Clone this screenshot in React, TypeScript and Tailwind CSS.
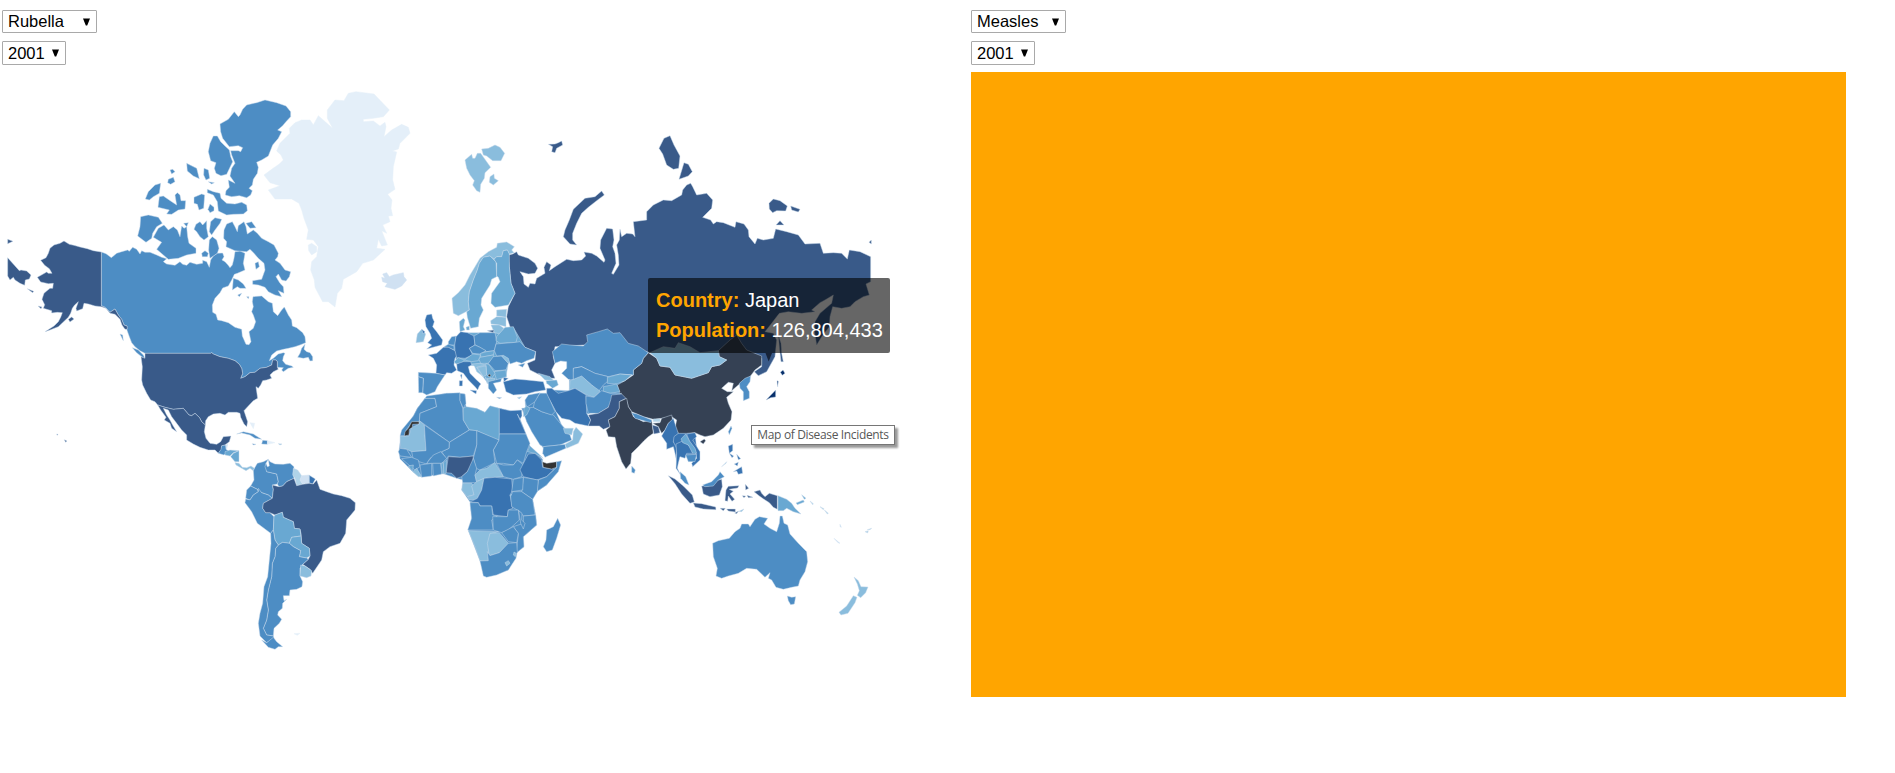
import React from "react";

type Region = { x: number; y: number; shapes: string[] };

const FILLS: Record<string, string> = {
  D: "#395a89",
  C: "#4d8dc4",
  S: "#3873b1",
  M: "#69a8d2",
  L: "#8abddd",
  G: "#b0d3e8",
  I: "#d0e1f2",
  V: "#e4eff9",
  K: "#354154",
  X: "#333333",
  J: "#08306b",
};

// Each region keeps its outlines in a local grid of thirds of a pixel.
// The first letter of a shape names its fill.
const REGIONS: Region[] = [
  {
    // Alaska and Canada
    x: 0,
    y: 80,
    shapes: [
      "C 304,516 318,521 334,533 350,520 365,515 383,510 388,514 398,502 410,508 420,522 425,512 435,517 450,517 470,525 485,532 500,536 490,545 500,552 525,556 540,545 548,553 560,556 570,547 590,553 608,550 608,541 620,545 628,562 632,540 640,528 652,520 668,519 672,530 666,540 675,545 684,555 690,563 697,555 702,535 705,515 720,513 735,520 730,550 735,570 712,580 703,583 695,600 685,618 668,624 660,638 645,655 637,675 638,697 648,703 653,720 665,722 685,728 705,742 725,748 727,768 738,793 747,794 753,785 747,755 760,745 767,725 760,705 755,695 760,680 757,665 759,650 785,648 805,665 817,670 820,695 833,707 845,690 853,681 865,705 875,720 877,738 890,743 908,758 915,770 917,788 900,795 885,800 865,805 850,808 830,813 815,825 808,842 820,835 835,822 850,818 855,820 850,830 848,842 857,853 875,858 880,862 865,865 850,875 845,870 850,863 832,862 832,845 828,840 818,840 815,855 800,862 780,865 765,877 750,878 735,890 722,895 728,880 725,865 718,853 705,842 685,835 660,830 640,822 635,818 632,820 435,820 420,812 405,800 395,788 388,770 380,748 381,738 372,735 365,718 355,705 345,687 330,697 315,682 304,677",
      "D 304,516 280,512 262,506 240,501 222,496 208,493 192,483 180,490 162,495 150,505 145,520 138,533 122,541 134,556 148,566 156,580 145,580 140,576 128,583 112,592 122,606 145,611 160,610 158,625 150,625 140,633 132,640 126,658 134,674 130,685 155,692 155,699 172,697 187,698 182,712 175,725 162,738 135,755 150,750 175,740 186,730 205,712 212,700 217,685 224,675 235,665 228,685 230,693 248,686 252,670 265,672 285,678 304,680 318,685 330,700 345,703 360,718 366,735 375,748 383,747 381,738 372,735 365,718 355,705 345,687 330,697 315,682 304,677",
      "D 23,478 39,484 23,491",
      "D 23,533 58,572 63,570 80,573 93,585 88,597 76,600 74,616 60,610 45,600 40,592 30,600 23,588",
      "D 82,626 101,634 98,638",
      "D 114,678 126,681 123,686",
      "D 205,718 215,711 222,717 210,726",
      "C 728,88 740,75 770,68 795,60 830,68 858,78 872,95 872,110 858,125 848,137 833,150 845,155 835,175 818,195 810,215 805,228 785,240 770,247 775,262 772,280 760,298 757,315 747,325 757,332 752,345 740,353 718,347 695,350 676,345 678,332 688,322 685,300 705,310 690,288 695,265 705,250 695,225 692,212 715,212 722,215 728,203 715,197 688,200 668,175 662,155 660,132 685,118 703,95 715,110 720,105",
      "C 640,168 652,168 662,185 675,198 688,210 692,230 698,245 690,262 680,283 663,287 648,280 643,265 648,248 632,242 625,215 630,190",
      "C 622,328 640,335 660,340 663,355 680,370 705,372 725,367 740,375 742,392 730,402 700,403 680,405 655,393 652,365 640,345 622,338",
      "C 510,270 518,268 525,275 515,282",
      "C 505,298 520,292 525,305 512,313 503,308",
      "C 560,250 590,265 598,296 580,288 562,273",
      "C 612,265 625,270 629,295 618,300 611,285",
      "C 625,305 643,308 635,312",
      "C 436,357 445,335 465,315 482,310 478,340 460,350 448,360",
      "C 478,350 490,348 515,365 530,375 525,345 532,338 540,345 543,362 557,362 555,387 535,390 515,403 500,402 508,390 474,382",
      "C 582,352 605,342 614,345 611,385 597,390 592,373 582,370",
      "C 630,372 642,382 642,392 630,398 624,388",
      "C 422,410 445,405 475,412 487,430 470,440 458,460 455,475 438,487 413,468 420,440",
      "C 460,472 475,445 492,435 505,450 520,440 532,450 540,470 545,438 552,445 560,440 563,470 567,490 588,505 588,520 560,525 535,535 505,538 490,525 470,508 485,487",
      "C 551,430 565,428 560,440",
      "C 588,433 600,425 608,435 620,422 620,445 625,470 612,480 600,470 590,455 582,448",
      "C 632,425 645,413 665,418 660,430 645,450 635,465 628,455",
      "C 628,480 637,470 650,480 657,505 652,520 640,528 630,535 626,510",
      "C 605,520 615,512 625,520 622,530 607,530",
      "C 672,450 680,432 697,425 705,440 712,455 715,437 732,425 738,440 742,462 760,450 772,460 785,475 805,485 822,495 835,520 833,530 825,540 840,550 855,570 872,575 868,590 858,603 845,600 835,582 828,590 840,610 850,620 852,640 835,632 845,650 825,645 805,635 795,622 775,615 758,613 758,602 785,598 795,570 792,550 775,535 762,520 750,508 740,515 705,512 678,500 680,485 671,475",
      "C 738,430 755,425 768,443 750,445",
      "C 765,550 775,545 778,560 768,568",
      "C 700,595 715,600 730,612 738,625 720,625 712,620 697,630",
      "C 713,645 725,640 718,650",
      "C 740,650 747,650 745,656",
      "C 360,762 368,765 370,782",
    ],
  },
  {
    // Greenland and Iceland
    x: 200,
    y: 80,
    shapes: [
      "V 192,285 215,268 238,252 250,240 243,225 230,213 240,190 270,160 268,145 285,128 305,120 330,120 340,135 355,107 398,145 382,115 382,90 405,60 432,62 445,40 468,35 522,42 568,90 550,110 520,115 490,118 490,125 520,123 540,138 555,127 558,140 552,170 575,150 605,133 625,142 630,160 600,190 595,207 577,213 590,216 580,260 578,300 585,328 563,343 576,360 573,385 578,407 565,408 570,425 548,435 560,460 545,452 562,495 545,498 535,478 530,505 555,508 520,540 488,550 470,575 430,598 425,625 412,640 405,681 385,665 368,665 345,622 343,600 332,570 335,545 350,530 355,500 340,480 320,478 325,450 312,415 305,390 297,370 275,357 225,357 205,330 240,317 210,308",
      "V 325,495 335,490 350,500 350,515 335,525 326,512",
      "I 545,592 555,595 548,582 560,578 568,590 580,585 610,578 612,590 620,600 605,618 585,628 555,620 562,610 548,605",
    ],
  },
  {
    // The Americas
    x: 120,
    y: 330,
    shapes: [
      "C 555,43 545,55 540,70 533,82 550,85 565,82 570,93 578,92 578,80 570,68 560,65 552,58",
      "C 37,53 55,60 70,75 76,88 65,80 50,68",
      "D 63,80 75,85 75,70 272,70 275,68 280,72 300,80 325,85 345,92 358,103 365,115 368,130 362,145 375,140 390,128 405,127 420,115 440,112 455,105 458,90 468,90 472,95 472,112 475,118 460,125 450,135 455,145 440,150 428,152 422,165 415,175 408,170 413,205 400,212 385,228 372,242 378,260 383,275 380,290 372,282 362,262 360,250 350,247 325,247 315,255 300,250 280,252 265,260 257,272 256,285 245,275 238,262 225,250 215,257 207,255 190,235 160,238 135,232 113,225 105,215 92,210 80,190 68,165 65,150 67,110",
      "D 113,225 135,232 160,238 190,235 207,255 215,257 225,250 238,262 245,275 256,285 253,305 258,325 270,340 290,343 302,335 310,320 333,318 328,335 315,345 305,348 305,358 295,370 285,360 265,360 240,352 220,342 200,330 200,315 185,300 170,280 155,260 145,240 130,235 140,255 150,270 158,285 170,305 155,295 150,280 133,270 138,262 122,240",
      "C 303,358 305,347 317,345 318,358 325,362 312,375 295,370",
      "I 318,345 323,343 320,357",
      "M 315,365 330,360 357,362 340,368 330,378 315,375",
      "M 357,362 357,395 345,395 332,380 340,370",
      "L 345,398 357,400 367,412 380,413 393,408 403,415 400,422 390,415 378,422 360,412 348,405",
      "C 350,312 370,305 400,312 425,328 405,325 390,315 365,309",
      "C 428,331 442,332 442,343 425,342",
      "V 443,332 465,338 443,343",
      "C 397,341 408,343 400,345",
      "L 475,341 486,342 480,345",
      "V 390,278 404,280 400,296",
      "C 445,388 438,400 440,425 470,432 475,455 472,462 457,465 460,478 457,505 445,495 425,488 412,478 392,468 402,450 400,422 405,412 412,400 430,395",
      "C 445,388 448,408 442,410 438,400 435,410 440,425 470,432 475,455 472,462 477,470 488,468 500,455 522,445 520,430 522,410 510,400 490,403 465,402 450,395",
      "G 520,415 533,420 545,437 540,450 548,463 530,467 525,445 518,435",
      "I 545,437 568,435 568,458 548,462 540,450",
      "S 568,436 586,447 578,462 568,458",
      "C 392,468 412,478 415,485 400,495 390,510 377,505 380,480",
      "C 415,475 425,488 445,495 457,505 430,520 428,535 437,548 450,548 462,560 460,600 452,610 412,580 395,545 375,518 377,507 390,510 400,495 415,485",
      "D 457,465 477,470 488,468 500,455 522,445 530,467 548,463 568,460 580,462 590,450 600,478 620,485 640,492 665,497 690,505 706,518 705,540 680,570 677,610 660,640 630,650 610,665 605,690 578,730 570,718 548,703 565,688 570,678 568,655 545,640 543,610 540,597 523,595 520,575 490,562 487,547 465,555 450,548 437,548 428,535 430,520 457,505 460,478",
      "M 462,560 465,555 487,547 490,562 520,575 523,595 540,597 543,618 515,622 508,640 488,637 475,645 465,630 460,600",
      "M 508,640 515,622 543,618 545,640 568,655 570,678 560,684 538,680 542,662 520,650",
      "C 475,645 488,637 508,640 520,650 542,662 538,680 560,684 565,688 548,703 540,715 540,738 548,755 546,770 530,778 510,780 508,797 490,797 492,812 500,808 488,820 487,835 475,845 473,855 485,868 478,880 462,895 460,918 440,915 430,895 440,870 445,840 440,810 445,780 455,740 457,700 465,680 467,655",
      "L 542,705 555,708 575,722 573,738 560,743 540,738",
      "C 452,610 460,600 465,630 475,645 467,655 465,680 457,700 455,740 445,780 440,810 445,840 440,870 430,895 440,915 460,918 462,925 440,938 420,918 415,880 420,850 428,820 432,770 443,740 448,690 453,640",
      "C 425,930 440,938 460,922 470,935 488,950 475,950 465,958 445,952",
      "V 522,911 540,910 532,916",
    ],
  },
  {
    // Russia and the Arctic coast
    x: 440,
    y: 130,
    shapes: [
      "D 218,372 230,365 235,375 265,385 285,400 293,415 285,430 265,432 240,425 250,440 252,462 265,472 270,460 285,462 290,445 315,430 312,412 320,395 333,405 328,422 345,410 380,388 400,392 425,390 437,378 432,366 455,370 470,378 492,397 495,390 480,355 482,330 500,295 518,297 522,330 518,350 525,370 528,400 515,430 520,433 537,405 535,375 530,345 538,330 540,297 545,320 560,310 578,312 585,320 580,275 620,270 620,245 640,225 670,210 695,212 725,195 728,180 740,165 752,160 758,170 770,195 800,190 818,210 815,235 788,262 812,270 820,282 830,275 850,278 885,292 888,275 912,282 925,300 927,320 945,342 952,325 970,330 1000,325 1007,297 1040,305 1075,315 1095,342 1140,340 1150,370 1180,368 1205,370 1222,387 1228,360 1260,365 1292,380 1292,455 1278,462 1288,495 1270,500 1245,515 1230,530 1205,535 1178,530 1170,560 1168,590 1145,620 1130,645 1123,600 1125,575 1140,550 1175,520 1180,495 1155,510 1140,518 1115,540 1125,545 1085,550 1045,545 1018,550 995,580 975,605 1000,610 1010,630 1005,680 980,725 955,737 943,725 965,710 965,685 900,680 630,668 560,650 500,620 435,645 345,650 340,680 345,700 335,720 345,745 325,745 300,735 270,720 262,700 285,690 287,665 255,652 230,635 228,620 210,590 200,560 205,530 225,490 213,460 208,410 206,375",
      "D 370,320 375,300 388,270 400,238 435,205 465,200 485,183 493,195 470,212 445,232 425,250 410,280 398,310 398,330 410,345 390,342",
      "L 75,90 95,73 98,85 105,85 112,70 122,70 152,112 135,128 133,145 122,163 120,187 110,182 98,165 103,152 90,135 80,115",
      "L 125,57 145,55 165,45 180,52 194,70 183,92 158,92 140,78 130,75",
      "L 150,140 162,132 163,145 175,152 160,165 148,157",
      "D 325,43 345,42 355,38 365,33 368,45 350,55 345,68 335,65 338,50",
      "D 657,55 672,25 690,17 702,45 720,78 716,115 700,118 680,105 668,72",
      "D 732,98 745,103 757,125 745,138 717,148",
      "D 987,220 1000,207 1020,212 1042,228 1037,243 1010,242 998,248 988,237",
      "D 1052,228 1080,238 1075,246 1055,240",
      "D 1008,285 1020,272 1032,285",
      "D 1287,337 1294,330 1294,342",
      "D 1015,615 1023,640 1025,670 1030,695 1023,695 1019,660",
      "J 978,810 1007,780 1007,801 992,803",
      "J 1021,727 1029,720 1035,730 1027,736",
      "J 1011,752 1015,754 1013,771",
    ],
  },
  {
    // Europe
    x: 380,
    y: 230,
    shapes: [
      "M 205,345 242,308 345,308 400,292 435,352 385,400 378,440 345,452 325,462 285,408 230,400 222,362",
      "L 216,205 235,188 255,165 270,135 285,110 300,85 325,65 350,52 352,40 380,36 403,50 395,60 402,68 388,72 382,60 370,62 365,80 350,80 342,88 330,78 310,82 298,100 292,120 280,150 268,185 265,215 268,240 258,245 235,257 220,250",
      "M 330,78 348,95 350,140 335,148 330,165 305,205 303,225 310,240 298,265 295,290 272,295 262,262 260,245 268,240 265,215 268,185 280,150 292,120 298,100 310,82",
      "M 342,88 350,80 365,80 370,62 382,60 388,72 388,110 393,160 405,190 385,225 345,232 333,220 335,190 360,155 355,142 350,138 350,100",
      "M 238,275 250,265 255,270 250,290 255,300 240,305",
      "M 258,292 268,288 268,300 260,300",
      "S 140,255 155,252 158,265 163,275 158,290 170,305 188,330 185,345 140,357 155,345 143,338 155,325 150,310 138,290 135,270",
      "L 125,298 137,312 130,335 108,338 112,312",
      "S 125,298 135,305 130,312",
      "S 145,375 170,370 190,352 205,350 225,362 232,375 225,385 222,405 230,420 215,430 200,428 195,435 168,430 170,405 160,385",
      "C 115,427 168,430 195,435 185,450 172,470 165,485 140,495 128,488 130,445 115,440",
      "C 115,440 130,445 128,488 116,488",
      "C 205,335 215,320 228,318 225,345 205,345",
      "C 192,350 205,343 222,348 222,360 205,352",
      "S 228,320 242,305 262,308 282,318 285,345 268,355 278,375 255,385 230,383 225,362 224,345",
      "C 282,318 300,308 345,308 350,335 343,362 320,365 300,352 285,345",
      "C 268,355 285,345 300,352 318,362 300,372 278,370",
      "M 222,395 235,383 253,390 245,400 228,402",
      "M 253,390 278,372 302,375 295,392 275,395",
      "M 302,370 320,365 343,362 340,375 302,382",
      "M 300,382 340,375 340,385 325,400 302,400 297,388",
      "C 325,400 340,380 365,378 385,400 378,420 345,422",
      "L 365,378 380,375 390,392 385,400",
      "M 342,425 378,420 380,440 350,450",
      "M 318,400 328,405 345,430 335,445 320,435",
      "L 275,402 300,400 318,405 290,412 310,440 290,425 283,408",
      "L 292,412 318,408 320,435 310,440",
      "L 315,440 325,450 322,462",
      "L 322,445 345,445 340,455 326,458",
      "C 325,455 345,450 365,445 362,455 340,460 350,480 340,492 325,475",
      "S 230,402 250,395 272,395 275,405 265,410 270,430 290,450 303,462 298,468 293,480 285,470 265,450 250,430 232,422",
      "S 270,480 290,482 288,492",
      "S 238,452 248,452 247,468 238,468",
      "S 241,435 246,433 245,447",
      "L 350,240 380,238 378,262 350,258",
      "L 332,272 350,260 378,262 378,290 358,285 333,282",
      "L 333,285 358,285 372,295 360,312 343,308",
      "D 322,302 342,300 340,308",
      "M 350,320 375,292 400,290 412,322 408,337 360,340 348,332",
      "C 348,342 408,337 420,335 435,352 467,365 462,385 440,392 425,400 410,395 390,402 385,385 370,376 350,378 343,362",
      "C 415,405 435,400 428,412",
      "S 370,455 405,447 440,450 490,455 497,480 465,485 440,492 400,495 378,485",
      "S 370,442 385,445 372,455",
      "L 475,430 510,440 522,452 495,450",
      "M 498,452 530,450 535,465 518,475 500,460",
      "L 412,503 425,500 418,507",
      "C 350,502 365,503 358,506",
      "X 324,436 328,432 333,436 328,441",
    ],
  },
  {
    // Africa
    x: 380,
    y: 380,
    shapes: [
      "C 135,55 200,40 255,42 258,80 290,87 315,97 330,79 358,85 390,92 412,96 438,162 450,198 488,238 488,255 530,262 500,315 470,335 458,358 467,405 470,435 430,470 432,500 408,520 385,570 320,590 300,543 265,452 275,415 270,366 245,330 250,300 230,295 190,281 125,291 98,275 60,236 57,215 62,168 100,108 112,85",
      "C 112,85 135,55 165,55 170,80 120,100 118,125 95,128 80,148 73,168 60,168 65,150 90,120 100,108",
      "C 140,48 200,40 240,38 240,60 248,85 250,120 268,150 208,187 118,122 120,100 170,80 165,55 135,55",
      "C 240,40 255,42 258,70 250,85 240,62",
      "L 60,168 87,168 92,148 100,140 117,133 118,122 133,135 138,212 95,215 80,208 62,205",
      "X 95,125 117,125 117,132 98,133 97,142 88,148 87,165 73,168 75,155 85,145",
      "M 258,80 290,85 315,97 330,77 358,85 358,178 350,180 290,152 268,150 250,120 250,85",
      "S 358,85 390,92 425,90 426,108 420,118 412,102 438,162 358,162",
      "C 358,162 438,162 450,190 440,215 430,250 412,240 400,255 370,250 350,250 340,210 357,180",
      "C 350,250 370,255 400,255 412,240 430,255 425,290 400,298 370,290",
      "C 290,152 357,180 340,210 345,248 300,270 288,265 280,235 290,195",
      "C 208,187 268,150 290,152 290,195 280,228 240,232 205,228 200,238 185,215 207,205",
      "C 133,135 208,187 207,205 185,215 150,235 140,252 100,240 95,215 138,212",
      "D 205,230 240,232 280,228 278,250 262,275 245,290 230,295 215,280 198,278",
      "C 140,250 160,225 182,215 200,235 185,250",
      "C 60,205 80,208 95,232 60,228 55,215",
      "C 65,236 95,232 115,240 120,260 105,270 90,258",
      "M 85,258 100,255 98,275",
      "L 98,275 110,265 125,290 115,290",
      "C 120,255 155,250 155,288 125,292",
      "C 158,250 182,250 185,282 160,288",
      "M 183,250 190,248 192,282 187,282",
      "M 190,248 200,240 198,280 192,282",
      "C 245,290 262,275 280,235 290,265 285,285 290,308 248,308",
      "L 285,285 300,270 320,265 345,248 370,290 345,292 312,295 290,305",
      "L 248,310 275,310 285,325 280,345 262,350 245,330",
      "L 275,318 290,305 312,295 305,330 290,358 268,360 262,350 282,345",
      "S 312,295 345,292 395,297 398,330 390,345 398,385 385,390 382,410 340,405 335,378 300,378 295,368 270,366 292,355 305,330",
      "S 425,260 445,222 465,220 485,240 488,262 522,268 500,290 470,300 430,290 420,270",
      "M 442,215 450,198 480,225 490,235 465,220",
      "X 487,245 500,250 530,245 530,262 515,267 490,262",
      "C 530,245 545,242 535,275 500,315 470,335 475,300 500,290 530,262",
      "C 430,292 475,300 472,335 458,358 425,335",
      "C 400,298 430,292 428,330 395,335",
      "M 390,345 400,342 395,355",
      "C 398,335 425,335 458,358 465,405 430,408 420,395 395,380 392,350",
      "C 270,368 295,368 300,378 335,378 338,405 352,408 335,420 340,450 263,450 275,415",
      "C 338,410 382,410 385,390 415,390 418,420 385,450 365,458 340,450",
      "C 430,408 467,405 470,435 430,470 432,500 408,520 412,490 415,460 400,440 430,430",
      "C 416,392 426,400 425,420 435,430 430,447 422,430",
      "C 365,458 400,440 415,460 410,488 385,485",
      "L 265,452 355,455 330,462 325,542 300,543 285,500",
      "L 330,460 358,458 385,490 358,518 328,527 322,490",
      "C 300,543 325,542 322,515 330,527 358,518 385,490 410,488 412,515 408,535 385,570 350,585 320,592 310,588",
      "L 375,548 385,542 390,550 380,558",
      "L 402,516 409,520 406,530 400,525",
      "C 500,450 520,440 533,415 542,435 530,475 517,510 500,515 490,500 498,480",
    ],
  },
  {
    // Asia
    x: 520,
    y: 320,
    shapes: [
      "C 148,180 165,145 290,160 310,190 305,225 205,282 95,240 100,210 148,212",
      "C 15,240 60,220 80,220 108,275 125,315 150,342 130,370 70,385 20,305",
      "S 455,350 475,338 525,338 530,385 528,405 500,405 470,400",
      "K 385,98 410,115 420,138 450,142 465,165 515,175 565,158 575,140 600,135 620,120 598,110 595,92 630,60 650,45 665,70 680,90 725,108 725,135 705,150 690,170 672,180 655,195 635,212 640,190 625,187 605,205 622,215 640,215 620,232 625,250 636,275 633,300 610,325 580,345 555,350 540,345 525,338 500,340 475,340 465,325 470,300 455,290 425,295 400,298 370,290 335,275 325,260 320,240 300,225 292,195 315,182 340,165 340,150 365,130 370,115",
      "L 390,98 430,80 465,85 475,68 510,80 540,98 595,92 598,110 620,120 600,135 575,140 565,158 515,175 465,165 450,142 420,138 410,115",
      "K 540,365 553,357 557,362 550,372",
      "C 658,190 675,175 692,168 690,185 680,200 688,215 688,235 670,242 670,215 660,205",
      "C 97,95 125,72 150,75 190,78 203,65 200,45 235,35 262,27 280,40 300,38 325,70 355,78 385,98 370,115 365,130 340,150 340,165 300,162 265,170 225,160 185,140 160,145 160,180 145,178 125,160 140,145 140,125 122,123 105,130",
      "C 160,145 185,140 225,160 265,170 262,185 250,195 235,215 215,195 185,170 160,180",
      "L 150,182 185,168 215,195 240,213 222,232 200,225 165,205 148,210",
      "M 262,172 300,162 335,165 315,182 290,192 262,190",
      "M 250,200 290,192 300,215 270,220 250,215",
      "S 80,205 95,205 115,220 145,212 165,205 198,225 200,280 212,300 205,318 165,310 150,300 125,295 108,275 92,245 80,225",
      "C 198,228 222,232 245,212 270,220 305,220 280,235 265,262 235,280 205,280 198,250",
      "D 205,285 235,280 265,262 272,240 275,225 305,222 318,235 298,245 298,265 285,290 265,300 270,320 250,328 238,318 205,318 212,300",
      "K 298,245 320,235 325,260 335,275 340,290 370,305 395,300 400,340 385,350 372,362 355,380 335,400 332,430 318,447 305,425 290,380 285,352 265,350 258,330 270,320 265,300 285,290 298,265",
      "K 398,310 420,308 425,295 455,285 458,300 445,310 435,330 425,340 415,320",
      "C 335,278 350,282 395,300 393,308 345,295",
      "G 400,297 420,297 420,305 400,305",
      "D 397,315 415,320 420,338 402,342",
      "C 335,438 346,450 343,460 335,457",
      "S 425,348 435,330 445,310 460,295 468,320 475,340 462,350 460,365 470,385 470,425 465,400 460,380 440,388 440,370",
      "S 468,372 490,362 515,385 518,400 500,400 495,415 480,410 475,430 472,445 482,465 468,445 470,400",
      "S 500,342 525,338 530,350 518,360 540,395 540,420 518,440 515,430 530,415 525,390 510,368",
      "M 483,357 497,342 508,362 525,385 530,400 518,400 505,375 488,368",
      "C 497,405 530,403 525,425 505,425",
      "C 480,455 497,470 507,495 495,490 482,475",
      "C 625,335 633,318 636,325 628,344",
      "S 625,378 638,373 638,392 628,400",
      "S 628,400 641,408 636,413",
      "S 650,403 662,416 655,419",
      "S 643,432 655,427 652,438",
      "S 640,455 665,440 668,460 655,463 650,453",
      "G 605,440 620,425 618,430",
      "C 5,265 40,262 65,275 100,285 125,315 150,345 155,360 120,375 70,380 60,375 35,335 20,305",
      "C 40,262 45,240 60,220 80,220 92,245 105,275 95,285 65,275",
      "C 15,240 25,225 60,218 45,245 20,262",
      "M 12,265 20,258 30,265 20,285 10,290",
      "C 70,380 135,373 138,385 75,412 68,400",
      "L 135,373 158,360 160,335 168,322 188,342 175,370 140,385",
      "L 130,325 160,325 155,345 135,340",
    ],
  },
  {
    // Indonesia and Oceania
    x: 640,
    y: 380,
    shapes: [
      "D 85,287 105,297 130,318 157,345 163,366 150,370 125,342 105,311",
      "D 160,369 185,371 227,381 228,389 190,387 165,381",
      "D 185,318 205,318 235,300 245,298 247,320 238,345 210,350 190,342",
      "C 188,315 215,305 235,285 240,275 253,290 235,300 220,318 195,320",
      "D 258,330 265,319 297,317 293,324 268,328 280,334 270,342 284,358 276,364 265,348 263,364 255,362",
      "D 240,385 256,385 250,392",
      "D 260,387 286,387 286,396 265,393",
      "D 284,399 296,393 290,401",
      "L 297,394 312,387 305,395",
      "D 316,313 326,325 317,330",
      "D 307,347 317,348 312,353",
      "D 321,346 339,352 325,353",
      "D 342,335 360,330 365,340 375,350 388,340 412,347 412,388 400,382 388,368 372,358 358,348",
      "M 414,347 440,358 455,370 465,385 483,402 460,395 440,385 430,392 414,392",
      "M 468,369 490,360 493,366 472,374",
      "M 485,344 498,355 493,358",
      "G 510,363 520,371 518,374",
      "G 540,380 552,386 550,389",
      "G 553,390 565,400 562,402",
      "G 675,455 685,452 683,459",
      "G 682,449 695,445 690,449",
      "I 582,475 600,490 594,488",
      "I 600,433 604,442 600,440",
      "C 218,490 235,482 268,475 285,455 300,445 305,432 325,432 330,440 345,418 358,410 383,415 372,432 390,445 410,455 418,430 420,408 427,408 432,430 443,435 450,462 475,490 500,515 503,545 495,575 480,600 475,618 455,622 430,628 408,622 395,600 385,595 390,578 375,592 350,568 320,565 295,580 265,588 245,595 228,588 232,565 220,530",
      "C 442,648 455,652 467,650 463,672 452,674 445,662",
      "L 642,591 655,602 663,620 684,621 677,638 662,653 652,646 658,632 652,612",
      "L 640,647 651,652 645,668 636,682 624,700 603,705 597,697 620,678",
    ],
  },
  {
    // Hawaii
    x: 50,
    y: 425,
    shapes: ["D 43,44 51,48 47,52", "D 20,27 24,28 22,31"],
  },
];

function WorldMap() {
  return (
    <svg
      width={875}
      height={625}
      viewBox="0 72 875 625"
      className="block shrink-0 overflow-visible"
      aria-label="Map of Disease Incidents"
    >
      {REGIONS.map((r, i) => (
        <g
          key={i}
          transform={`translate(${r.x} ${r.y}) scale(0.33333)`}
          strokeWidth={1.4}
          strokeLinejoin="round"
        >
          {r.shapes.map((s, j) => (
            <polygon
              key={j}
              fill={FILLS[s[0]]}
              stroke={s[0] === "V" || s[0] === "I" ? FILLS[s[0]] : "#c8dbeb"}
              points={s.slice(2)}
            />
          ))}
        </g>
      ))}
      <polygon points="765.5,353 772,353 768.7,361.5" fill="#172338" />
    </svg>
  );
}

function Picker({ value, className }: { value: string; className: string }) {
  return (
    <div
      className={`flex items-center justify-between rounded-[1px] border border-[#a9a9a9] bg-white pl-[5px] text-[16.5px] leading-none text-black ${className}`}
    >
      <span>{value}</span>
      <svg width="7" height="8" viewBox="0 0 7 8">
        <path d="M0 0.5H7L4.2 7.5H2.8Z" fill="#000" />
      </svg>
    </div>
  );
}

function Panel({ disease, children }: { disease: string; children: React.ReactNode }) {
  return (
    <section className="flex w-[969px] shrink-0 flex-col items-start">
      <Picker value={disease} className="h-[23px] w-[95px] pr-[6px]" />
      <Picker value="2001" className="mt-2 h-6 w-16 pr-[6px]" />
      <div className="mt-[7px]">{children}</div>
    </section>
  );
}

export default function App() {
  return (
    <main className="relative flex h-[773px] w-[1895px] overflow-hidden bg-white pl-0.5 pt-2.5 font-['Liberation_Sans',Arial,sans-serif]">
      <Panel disease="Rubella">
        <div className="-ml-0.5">
          <WorldMap />
        </div>
      </Panel>
      <Panel disease="Measles">
        <div className="h-[625px] w-[875px] bg-[#ffa500]" />
      </Panel>

      <div className="absolute left-[648px] top-[278px] h-[75px] w-[242px] whitespace-nowrap rounded-[2px] bg-black/60 px-2 pt-[7px] text-[20px] leading-[30px] text-white">
        <div>
          <b className="text-[#ffa500]">Country:</b> Japan
        </div>
        <div>
          <b className="text-[#ffa500]">Population:</b> 126,804,433
        </div>
      </div>

      <div className="absolute left-[751px] top-[425px] flex h-5 w-36 items-center justify-center whitespace-nowrap border border-[#767676] bg-white font-['Open_Sans','Noto_Sans',sans-serif] text-[12px] leading-none tracking-[-0.35px] text-[#575757] shadow-[3px_3px_2px_rgba(0,0,0,0.4)]">
        Map of Disease Incidents
      </div>
    </main>
  );
}
